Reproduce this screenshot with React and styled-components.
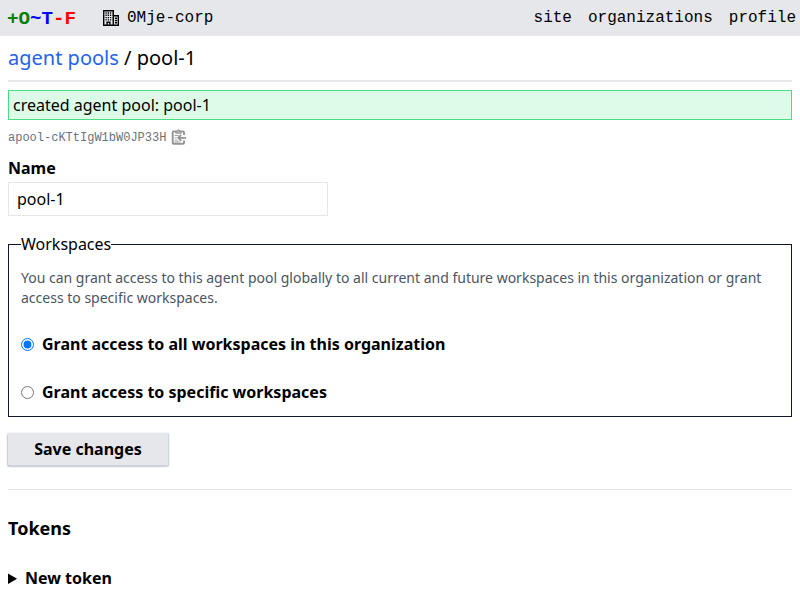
import React from "react";
import styled, { createGlobalStyle } from "styled-components";

const GlobalStyle = createGlobalStyle`
  *, *::before, *::after { box-sizing: border-box; }
  html { height: 100%; overflow: hidden; }
  body {
    margin: 0;
    background: #fff;
    color: #000;
    font-family: "Noto Sans", sans-serif;
    font-size: 16px;
    line-height: 24px;
  }
`;

const Header = styled.header`
  display: flex;
  align-items: center;
  justify-content: space-between;
  height: 36px;
  padding: 0 4px 0 7px;
  background: #e5e7eb;
  font-family: "Liberation Mono", monospace;
`;

const Brand = styled.div`
  display: flex;
  align-items: center;
`;

const Logo = styled.a`
  width: 96px;
  padding-top: 2px;
  font-size: 19.2px;
  font-weight: 700;
`;

const Tint = styled.span`
  color: ${(p) => p.$color};
`;

const Organization = styled.a`
  display: flex;
  align-items: center;
  gap: 8px;
`;

const Nav = styled.nav`
  display: flex;
  gap: 16px;
`;

const Main = styled.main`
  padding: 8px 8px 0;
`;

const Title = styled.div`
  height: 38px;
  border-bottom: 2px solid #e5e7eb;
  font-size: 20px;
  line-height: 28px;
`;

const Crumb = styled.a`
  color: #2563eb;
`;

const Flash = styled.div`
  height: 30px;
  margin-top: 8px;
  padding: 2px 4px;
  border: 1px solid #4ade80;
  background: #dcfce7;
`;

const Identifier = styled.div`
  display: flex;
  align-items: center;
  gap: 4.6px;
  height: 16px;
  margin-top: 9px;
  color: #6b7280;
  font: 12px/16px "Liberation Mono", monospace;
`;

const IdText = styled.span`
  padding-top: 2px;
`;

const Form = styled.form`
  margin-top: 11px;
`;

const Label = styled.label`
  display: block;
  height: 26px;
  font-weight: 700;
`;

const TextInput = styled.input`
  display: block;
  width: 320px;
  height: 34px;
  margin: 0;
  padding: 4px 8px;
  border: 1px solid #e5e7eb;
  background: #fff;
  color: #000;
  font: inherit;
  outline: none;
`;

const Fieldset = styled.fieldset`
  height: 185px;
  min-width: 0;
  margin: 16px 0 0;
  padding: 12px;
  border: 1px solid #0f172a;
`;

const Legend = styled.legend`
  padding: 0;
`;

const Description = styled.p`
  margin: 0 0 24px;
  color: #4b5563;
  font-size: 14px;
  line-height: 20px;
`;

const Choice = styled.label`
  display: flex;
  align-items: center;
  gap: 8px;
  margin-bottom: 24px;
  font-weight: 700;
`;

const Radio = styled.input`
  width: 13px;
  height: 13px;
  margin: 0;
`;

const Button = styled.button`
  display: block;
  width: 160px;
  height: 32px;
  margin: 16px 0 0;
  padding: 0;
  border: 0;
  background: #e5e7eb;
  color: #000;
  font: 700 16px/24px "Noto Sans", sans-serif;
  box-shadow: 0 0 1px 0.5px #cbd5e1, 0 1px 2px #64748b;
`;

const Divider = styled.hr`
  height: 1px;
  margin: 24px 0;
  border: 0;
  background: #e5e7eb;
`;

const Heading = styled.h3`
  margin: 0;
  font-size: 18px;
  font-weight: 700;
  line-height: 28px;
`;

const Details = styled.details`
  margin-top: 24px;
`;

const Summary = styled.summary`
  font-weight: 700;
`;

function BuildingIcon() {
  return (
    <svg width="16" height="16" viewBox="0 0 16 16" fill="none" stroke="#000">
      <path d="M.7 15.3V.7h9.6v14.6M10.3 5.7h5v9.6M0 15.3h16" strokeWidth="1.4" />
      <path d="M2.5 3h7M2.5 5.3h7M2.5 7.6h7M2.5 9.9h7" strokeWidth="1.4" strokeDasharray="1.3 .9" />
      <path d="M12 8.2h2M12 10.5h2M12 12.8h2" strokeWidth="1.4" />
      <path d="M4.1 15v-2.8h2.8V15" strokeWidth="1.4" />
    </svg>
  );
}

function CopyIcon() {
  return (
    <svg width="16" height="16" viewBox="0 0 16 16" fill="none" stroke="#949494">
      <path d="M13 6V3.4a1 1 0 0 0-1-1H2.7a1 1 0 0 0-1 1v10.3a1 1 0 0 0 1 1H12a1 1 0 0 0 1-1v-2.2" strokeWidth="1.9" />
      <path d="M4.7 4.2V2.4h1.4C6.1.3 8.8.3 8.8 2.4h1.4v1.8z" fill="#b4b4b4" strokeWidth="1" />
      <path d="M15 8.8H7.4M10.2 5.8l-3 3 3 3" strokeWidth="1.8" />
      <path d="M3.6 6.5h4M3.6 8.8h2M3.6 11.1h3M3.6 12.9h5" strokeWidth=".9" />
    </svg>
  );
}

const LOGO = [
  ["+O", "green"],
  ["~T", "blue"],
  ["-F", "red"],
];

export default function App() {
  return (
    <>
      <GlobalStyle />
      <Header>
        <Brand>
          <Logo>
            {LOGO.map(([text, color]) => (
              <Tint key={text} $color={color}>{text}</Tint>
            ))}
          </Logo>
          <Organization>
            <BuildingIcon />
            0Mje-corp
          </Organization>
        </Brand>
        <Nav>
          <a>site</a>
          <a>organizations</a>
          <a>profile</a>
        </Nav>
      </Header>
      <Main>
        <Title>
          <Crumb>agent pools</Crumb> / pool-1
        </Title>
        <Flash>created agent pool: pool-1</Flash>
        <Identifier>
          <IdText>apool-cKTtIgW1bW0JP33H</IdText>
          <CopyIcon />
        </Identifier>
        <Form onSubmit={(e) => e.preventDefault()}>
          <Label htmlFor="name">Name</Label>
          <TextInput id="name" defaultValue="pool-1" />
          <Fieldset>
            <Legend>Workspaces</Legend>
            <Description>
              You can grant access to this agent pool globally to all current and
              future workspaces in this organization or grant access to specific
              workspaces.
            </Description>
            <Choice>
              <Radio type="radio" name="scope" defaultChecked />
              Grant access to all workspaces in this organization
            </Choice>
            <Choice>
              <Radio type="radio" name="scope" />
              Grant access to specific workspaces
            </Choice>
          </Fieldset>
          <Button>Save changes</Button>
        </Form>
        <Divider />
        <Heading>Tokens</Heading>
        <Details>
          <Summary>New token</Summary>
        </Details>
      </Main>
    </>
  );
}
